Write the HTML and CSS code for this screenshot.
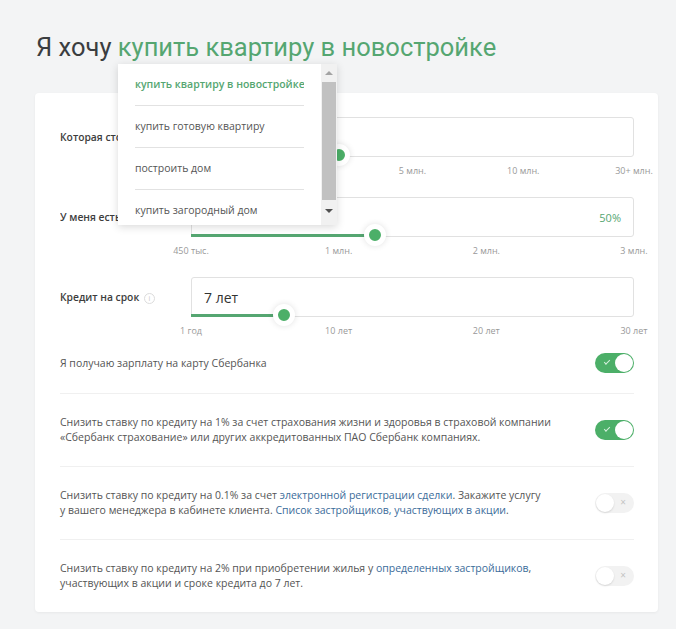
FILE: index.html
```html
<!DOCTYPE html>
<html lang="ru">
  <head>
    <meta charset="UTF-8" />
    <meta name="viewport" content="width=device-width, initial-scale=1.0" />
    <title>Ипотечный калькулятор</title>
    <link rel="stylesheet" href="styles.css">
  </head>
  <body>
    <div class="page">
      <!-- Заголовок с выбором цели -->
      <h1 class="title">Я хочу <span class="title-accent">купить квартиру в новостройке</span></h1>

      <!-- Открытый список целей -->
      <div class="dropdown">
        <ul class="dropdown-list">
          <li class="dropdown-item dropdown-item-active">купить квартиру в новостройке</li>
          <li class="dropdown-item">купить готовую квартиру</li>
          <li class="dropdown-item">построить дом</li>
          <li class="dropdown-item">купить загородный дом</li>
        </ul>
        <div class="scrollbar">
          <span class="scroll-btn"><span class="scroll-arrow scroll-up"></span></span>
          <span class="scroll-thumb"></span>
          <span class="scroll-btn"><span class="scroll-arrow scroll-down"></span></span>
        </div>
      </div>

      <div class="card">
        <!-- Стоимость (начало шкалы закрыто списком) -->
        <div class="field">
          <div class="field-label">Которая стоит</div>
          <div class="field-control">
            <div class="field-input"></div>
            <div class="slider-fill" style="width: 33.5%"></div>
            <span class="slider-thumb" style="left: 33.5%"></span>
          </div>
          <div class="ticks">
            <span></span>
            <span></span>
            <span>5 млн.</span>
            <span>10 млн.</span>
            <span>30+ млн.</span>
          </div>
        </div>

        <!-- Первоначальный взнос -->
        <div class="field">
          <div class="field-label">У меня есть</div>
          <div class="field-control">
            <div class="field-input">
              <span class="field-percent">50%</span>
            </div>
            <div class="slider-fill" style="width: 41.5%"></div>
            <span class="slider-thumb" style="left: 41.5%"></span>
          </div>
          <div class="ticks">
            <span>450 тыс.</span>
            <span>1 млн.</span>
            <span>2 млн.</span>
            <span>3 млн.</span>
          </div>
        </div>

        <!-- Срок кредита -->
        <div class="field">
          <div class="field-label">
            Кредит на срок
            <span class="info-icon">i</span>
          </div>
          <div class="field-control">
            <div class="field-input">
              <span class="field-value">7 лет</span>
            </div>
            <div class="slider-fill" style="width: 21%"></div>
            <span class="slider-thumb" style="left: 21%"></span>
          </div>
          <div class="ticks">
            <span>1 год</span>
            <span>10 лет</span>
            <span>20 лет</span>
            <span>30 лет</span>
          </div>
        </div>

        <!-- Дополнительные условия -->
        <div class="option">
          <p class="option-text">Я получаю зарплату на карту Сбербанка</p>
          <span class="toggle toggle-on"></span>
        </div>
        <div class="option">
          <p class="option-text">Снизить ставку по кредиту на 1% за счет страхования жизни и здоровья в страховой компании<br>«Сбербанк страхование» или других аккредитованных ПАО Сбербанк компаниях.</p>
          <span class="toggle toggle-on"></span>
        </div>
        <div class="option">
          <p class="option-text">Снизить ставку по кредиту на 0.1% за счет <a href="#">электронной регистрации сделки</a>. Закажите услугу<br>у вашего менеджера в кабинете клиента. <a href="#">Список застройщиков, участвующих в акции</a>.</p>
          <span class="toggle"></span>
        </div>
        <div class="option">
          <p class="option-text">Снизить ставку по кредиту на 2% при приобретении жилья у <a href="#">определенных застройщиков</a>,<br>участвующих в акции и сроке кредита до 7 лет.</p>
          <span class="toggle"></span>
        </div>
      </div>
    </div>
  </body>
</html>
```

FILE: styles.css
```css
/* Сброс стандартных отступов */
body,
h1,
p,
ul {
  margin: 0;
  padding: 0;
  box-sizing: border-box;
}

body {
  background-color: #f3f4f5;
  font-family: 'Open Sans', sans-serif;
  color: #555;
  font-size: 10.5px;
}

.page {
  position: relative;
  padding: 32px 18px 20px 35px;
}

/* Заголовок */
.title {
  padding-left: 1px;
  font-family: 'Roboto', sans-serif;
  font-weight: 400;
  font-size: 25.5px;
  line-height: 30px;
  color: #3a3d40;
}

.title-accent {
  color: #55a671;
}

/* Выпадающий список */
.dropdown {
  position: absolute;
  left: 118px;
  top: 64px;
  width: 219px;
  height: 161px;
  display: flex;
  background: #ffffff;
  box-shadow: 0 2px 8px rgba(0, 0, 0, 0.15);
  overflow: hidden;
  z-index: 2;
}

.dropdown-list {
  list-style: none;
  flex: 1;
  min-width: 0;
  padding-left: 17px;
  padding-right: 17px;
}

.dropdown-item {
  height: 41px;
  line-height: 41px;
  border-bottom: 1px solid #e2e2e2;
  white-space: nowrap;
  overflow: hidden;
  color: #555;
}

.dropdown-item-active {
  color: #55a671;
  font-weight: 600;
}

.scrollbar {
  width: 16px;
  display: flex;
  flex-direction: column;
  background: #f1f1f1;
}

.scroll-btn {
  height: 18px;
  display: flex;
  align-items: center;
  justify-content: center;
}

.scroll-btn:last-child {
  flex: 1;
  padding-bottom: 4px;
}

.scroll-arrow {
  width: 0;
  height: 0;
  border-left: 4px solid transparent;
  border-right: 4px solid transparent;
}

.scroll-up {
  border-bottom: 4px solid #a3a3a3;
}

.scroll-thumb {
  margin: 0 1px;
  height: 118px;
  background: #c1c1c1;
}

.scroll-down {
  border-top: 4px solid #505050;
}

/* Карточка калькулятора */
.card {
  margin-top: 31px;
  width: 623px;
  padding: 24px 24px 0 25px;
  box-sizing: border-box;
  background: #ffffff;
  border-radius: 4px;
  box-shadow: 0 1px 3px rgba(0, 0, 0, 0.05);
}

.field {
  display: grid;
  grid-template-columns: 131px 1fr;
  align-items: center;
  margin-bottom: 20px;
}

.field:nth-child(3) {
  margin-bottom: 0;
}

.field-label {
  font-size: 10.3px;
  font-weight: 600;
  color: #3d3d3d;
  white-space: nowrap;
  overflow: hidden;
}

.info-icon {
  display: inline-block;
  width: 9px;
  height: 9px;
  margin-left: 2px;
  border: 1px solid #dcdcdc;
  border-radius: 50%;
  font-size: 7px;
  line-height: 9px;
  text-align: center;
  font-weight: 400;
  color: #c8c8c8;
  vertical-align: middle;
}

.field-control {
  position: relative;
}

.field-input {
  height: 40px;
  box-sizing: border-box;
  display: flex;
  align-items: center;
  justify-content: flex-end;
  padding: 0 12px;
  border: 1px solid #e1e1e1;
  border-radius: 3px;
}

.field-value {
  margin-right: auto;
  font-size: 14px;
  color: #333;
}

.field-percent {
  color: #55a671;
  font-size: 11px;
}

.slider-fill {
  position: absolute;
  left: 0;
  bottom: 0;
  height: 3px;
  background: #55a671;
}

.slider-thumb {
  position: absolute;
  bottom: -9px;
  width: 22px;
  height: 22px;
  box-sizing: border-box;
  margin-left: -11px;
  border: 5px solid #ffffff;
  border-radius: 50%;
  background: #4caf68;
  box-shadow: 0 0 6px rgba(0, 0, 0, 0.12);
}

.ticks {
  grid-column: 2;
  display: flex;
  justify-content: space-between;
  margin: 8px -30px 0;
  font-size: 9px;
  line-height: 12px;
  color: #999;
}

.ticks span {
  width: 60px;
  text-align: center;
}

/* Переключатели условий */
.option {
  display: flex;
  align-items: center;
  justify-content: space-between;
  padding: 21px 0;
  border-bottom: 1px solid #f0f0f0;
}

.field + .option {
  padding-top: 16px;
  padding-bottom: 20px;
}

.option:last-child {
  border-bottom: none;
}

.option-text {
  line-height: 15px;
}

.option-text a {
  color: #3b6c9a;
  text-decoration: none;
}

.toggle {
  position: relative;
  flex-shrink: 0;
  width: 39px;
  height: 20px;
  border-radius: 10px;
  background: #f2f2f2;
}

.toggle::before {
  content: '';
  position: absolute;
  top: 1px;
  left: 1px;
  width: 18px;
  height: 18px;
  border-radius: 50%;
  background: #ffffff;
  box-shadow: 0 1px 2px rgba(0, 0, 0, 0.12);
}

.toggle::after {
  content: '×';
  position: absolute;
  right: 8px;
  top: 3px;
  font-size: 10px;
  line-height: 12px;
  color: #c4c4c4;
}

.toggle-on {
  background: #4caf68;
}

.toggle-on::before {
  left: 20px;
  box-shadow: none;
}

.toggle-on::after {
  content: '';
  left: 9px;
  right: auto;
  top: 7px;
  width: 5px;
  height: 2px;
  border-left: 1px solid #d8f0df;
  border-bottom: 1px solid #d8f0df;
  transform: rotate(-45deg);
}
```
